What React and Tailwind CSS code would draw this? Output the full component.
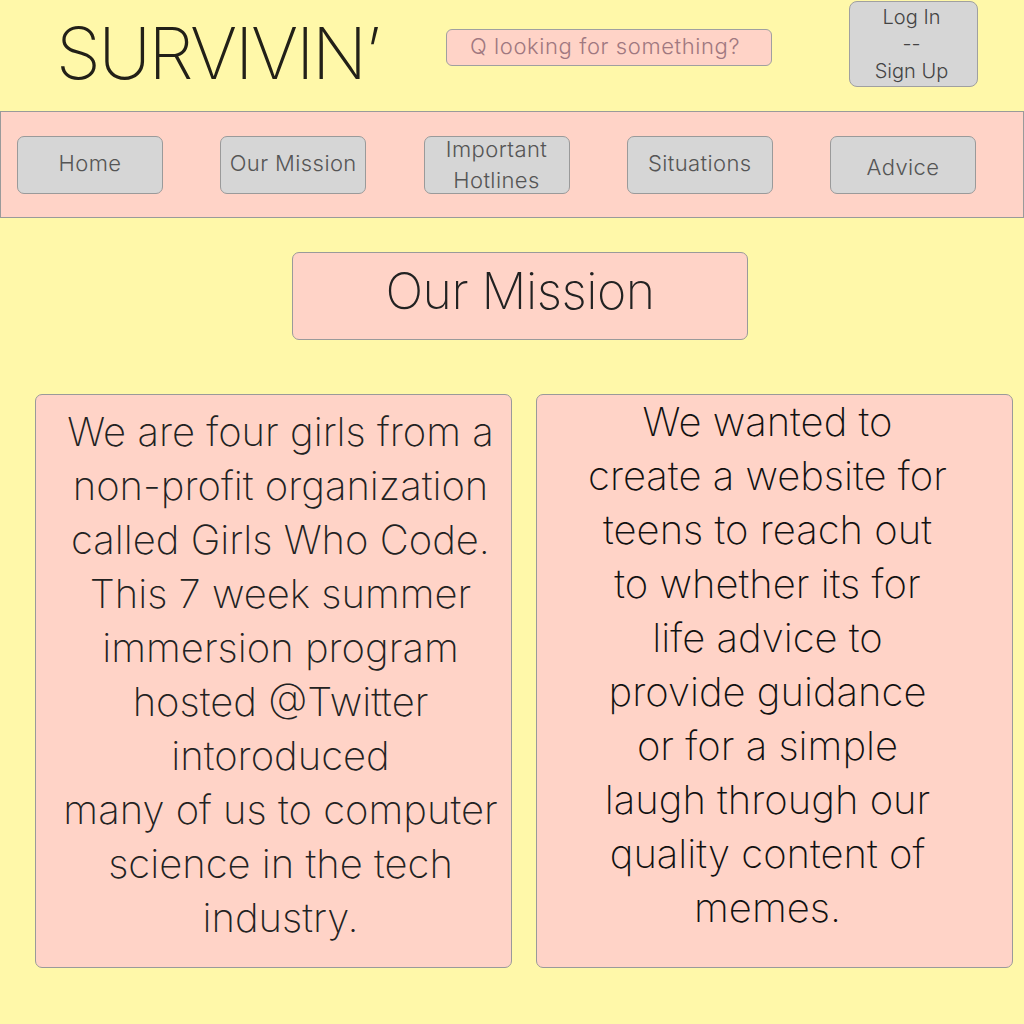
export default function App() {
  const font = { fontFamily: "Inter, 'Noto Sans', sans-serif" };
  const navItems = [
    { label: "Home" },
    { label: "Our Mission" },
    { label: "Important Hotlines", two: true },
    { label: "Situations" },
    { label: "Advice", offset: true },
  ];
  return (
    <div className="w-[1024px] h-[1024px] bg-[#fff8a9] overflow-hidden font-light" style={font}>
      <header className="flex h-[111px] items-start">
        <h1 className="ml-[56px] mt-[17px] text-[72px] leading-none font-extralight text-[#222018] tracking-[-2.3px]">
          SURVIVIN’
        </h1>
        <div className="ml-auto mt-[29px] w-[326px] h-[37px] rounded-[6px] border border-[#a0a0a0] bg-[#ffd3c7] pl-[23px] text-[22px] leading-[33px] text-[#a07880] font-light tracking-[0.6px]">
          Q looking for something?
        </div>
        <div className="ml-[77px] mr-[46px] mt-[1px] w-[129px] h-[86px] rounded-[8px] border border-[#a0a0a0] bg-[#d6d6d6] flex flex-col items-center justify-center pr-[4px] text-[20px] leading-[27px] text-[#444]">
          <span>Log In</span>
          <span>--</span>
          <span>Sign Up</span>
        </div>
      </header>
      <nav className="h-[107px] border border-[#9a9a9a] bg-[#ffd3c7] flex items-start justify-between pl-[16px] pr-[47px] pt-[24px]">
        {navItems.map((n) => (
          <div
            key={n.label}
            className="w-[146px] h-[58px] rounded-[7px] border border-[#9a9a9a] bg-[#d6d6d6] flex items-center justify-center text-center text-[22px] text-[#555] tracking-[0.4px]"
          >
            {n.two ? (
              <span className="leading-[31px] -mt-[1px]">Important<br />Hotlines</span>
            ) : (
              <span className={n.offset ? "mt-[4px]" : "-mt-[4px]"}>{n.label}</span>
            )}
          </div>
        ))}
      </nav>
      <div className="ml-[292px] mt-[34px] w-[456px] h-[88px] rounded-[7px] border border-[#9a9a9a] bg-[#ffd3c7] flex items-center justify-center pb-[9px] text-[50px] font-extralight text-[#222] tracking-[-0.5px]">
        Our Mission
      </div>
      <div className="flex gap-[24px] ml-[35px] mt-[54px]">
        <div className="w-[477px] h-[574px] rounded-[7px] border border-[#9a9a9a] bg-[#ffd3c7] pt-[10px] pl-[14px] text-center text-[40px] leading-[54px] text-[#222] whitespace-nowrap font-extralight">
          We are four girls from a<br />
          non-profit organization<br />
          called Girls Who Code.<br />
          This 7 week summer<br />
          immersion program<br />
          hosted @Twitter<br />
          intoroduced<br />
          many of us to computer<br />
          science in the tech<br />
          industry.
        </div>
        <div className="w-[477px] h-[574px] rounded-[7px] border border-[#9a9a9a] bg-[#ffd3c7] pr-[14px] text-center text-[40px] leading-[54px] text-[#111] whitespace-nowrap font-extralight">
          We wanted to<br />
          create a website for<br />
          teens to reach out<br />
          to whether its for<br />
          life advice to<br />
          provide guidance<br />
          or for a simple<br />
          laugh through our<br />
          quality content of<br />
          memes.
        </div>
      </div>
    </div>
  );
}
